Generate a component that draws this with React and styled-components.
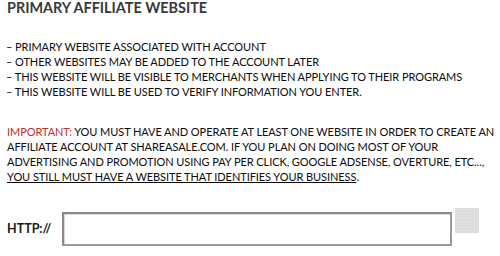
import React from "react";
import styled, { createGlobalStyle } from "styled-components";

const Global = createGlobalStyle`
  html, body { margin: 0; padding: 0; background: #fff; }
  body { font-family: Lato, "Liberation Sans", sans-serif; color: #0c0c0c; }
`;

const Page = styled.div`
  width: 500px;
  height: 256px;
  box-sizing: border-box;
  padding: 0 0 0 7px;
  display: flex;
  flex-direction: column;
  overflow: hidden;
`;

const Heading = styled.h1`
  margin: 0;
  font-size: 14.4px;
  line-height: 16px;
  font-weight: 700;
  color: #383838;
  white-space: nowrap;
`;

const List = styled.ul`
  list-style: none;
  margin: 23px 0 0 -1px;
  padding: 0;
  font-size: 11px;
  line-height: 15px;
  letter-spacing: -0.07px;
`;

const Item = styled.li`
  white-space: nowrap;
`;

const Para = styled.p`
  margin: 25px 0 0;
  font-size: 11px;
  line-height: 15px;
  letter-spacing: -0.07px;
  white-space: nowrap;
`;

const Important = styled.span`
  color: #c2302a;
`;

const Under = styled.span`
  text-decoration: underline;
`;

const Row = styled.div`
  display: flex;
  align-items: flex-start;
  margin-top: 24px;
`;

const Label = styled.label`
  font-size: 12.5px;
  font-weight: 700;
  color: #1a1a1a;
  line-height: 34px;
  margin-top: 4px;
  width: 55px;
  white-space: nowrap;
`;

const Input = styled.input`
  box-sizing: border-box;
  width: 390px;
  height: 34px;
  margin-top: 4px;
  border: 2px solid #8a8a8a;
  border-right-color: #9a9a9a;
  border-bottom-color: #9a9a9a;
  box-shadow: inset 1px 1px 0 #d8d8d8;
  background: #fff;
  outline: none;
`;

const Square = styled.div`
  width: 24px;
  height: 25px;
  margin-left: 3px;
  background: #dcdcdc;
  background-image: radial-gradient(#e8e8e8 0.6px, transparent 0.8px);
  background-size: 3px 3px;
`;

export default function App() {
  return (
    <>
      <Global />
      <Page>
        <Heading>PRIMARY AFFILIATE WEBSITE</Heading>
        <List>
          <Item>– PRIMARY WEBSITE ASSOCIATED WITH ACCOUNT</Item>
          <Item>– OTHER WEBSITES MAY BE ADDED TO THE ACCOUNT LATER</Item>
          <Item>– THIS WEBSITE WILL BE VISIBLE TO MERCHANTS WHEN APPLYING TO THEIR PROGRAMS</Item>
          <Item>– THIS WEBSITE WILL BE USED TO VERIFY INFORMATION YOU ENTER.</Item>
        </List>
        <Para>
          <Important>IMPORTANT:</Important> YOU MUST HAVE AND OPERATE AT LEAST ONE WEBSITE IN ORDER TO CREATE AN<br />
          AFFILIATE ACCOUNT AT SHAREASALE.COM. IF YOU PLAN ON DOING MOST OF YOUR<br />
          ADVERTISING AND PROMOTION USING PAY PER CLICK, GOOGLE ADSENSE, OVERTURE, ETC...,<br />
          <Under>YOU STILL MUST HAVE A WEBSITE THAT IDENTIFIES YOUR BUSINESS</Under>.
        </Para>
        <Row>
          <Label>HTTP://</Label>
          <Input type="text" />
          <Square />
        </Row>
      </Page>
    </>
  );
}
